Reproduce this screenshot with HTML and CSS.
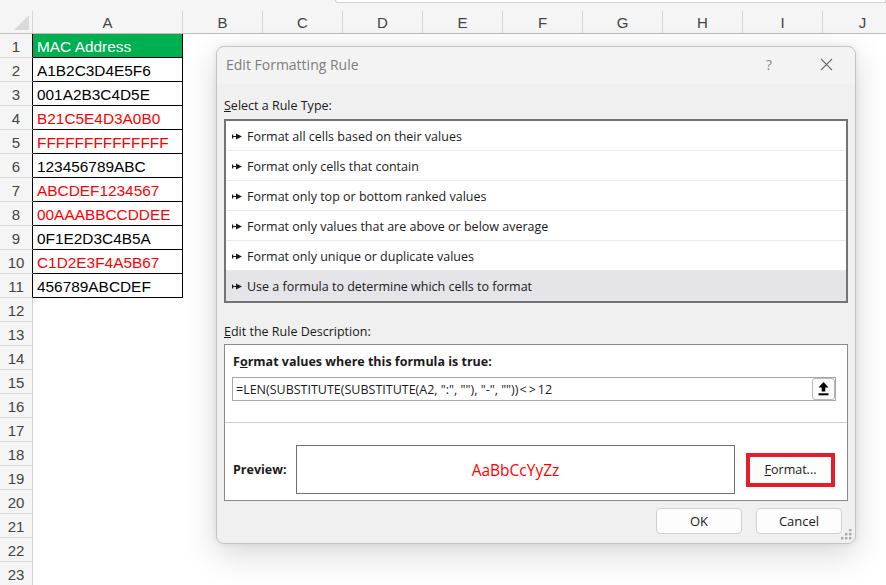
FILE: index.html
```html
<!DOCTYPE html>
<html lang="en">
<head>
    <meta charset="UTF-8">
    <meta name="viewport" content="width=device-width, initial-scale=1.0">
    <title>Edit Formatting Rule</title>
    <link rel="stylesheet" href="styles.css">
</head>
<body>
    <div class="sheet">
        <div class="top-strip"><div class="formula-edge"></div></div>
        <div class="row head">
            <div class="corner"><span class="tri"></span></div>
            <div class="ch">A</div>
            <div class="ch">B</div>
            <div class="ch">C</div>
            <div class="ch">D</div>
            <div class="ch">E</div>
            <div class="ch">F</div>
            <div class="ch">G</div>
            <div class="ch">H</div>
            <div class="ch">I</div>
            <div class="ch">J</div>
        </div>
        <div class="row"><div class="rh b">1</div><div class="cell b hdr">MAC Address</div></div>
        <div class="row"><div class="rh b">2</div><div class="cell b">A1B2C3D4E5F6</div></div>
        <div class="row"><div class="rh b">3</div><div class="cell b">001A2B3C4D5E</div></div>
        <div class="row"><div class="rh b">4</div><div class="cell b red">B21C5E4D3A0B0</div></div>
        <div class="row"><div class="rh b">5</div><div class="cell b red">FFFFFFFFFFFFFF</div></div>
        <div class="row"><div class="rh b">6</div><div class="cell b">123456789ABC</div></div>
        <div class="row"><div class="rh b">7</div><div class="cell b red">ABCDEF1234567</div></div>
        <div class="row"><div class="rh b">8</div><div class="cell b red">00AAABBCCDDEE</div></div>
        <div class="row"><div class="rh b">9</div><div class="cell b">0F1E2D3C4B5A</div></div>
        <div class="row"><div class="rh b">10</div><div class="cell b red">C1D2E3F4A5B67</div></div>
        <div class="row"><div class="rh b">11</div><div class="cell b">456789ABCDEF</div></div>
        <div class="row"><div class="rh">12</div><div class="cell"></div></div>
        <div class="row"><div class="rh">13</div><div class="cell"></div></div>
        <div class="row"><div class="rh">14</div><div class="cell"></div></div>
        <div class="row"><div class="rh">15</div><div class="cell"></div></div>
        <div class="row"><div class="rh">16</div><div class="cell"></div></div>
        <div class="row"><div class="rh">17</div><div class="cell"></div></div>
        <div class="row"><div class="rh">18</div><div class="cell"></div></div>
        <div class="row"><div class="rh">19</div><div class="cell"></div></div>
        <div class="row"><div class="rh">20</div><div class="cell"></div></div>
        <div class="row"><div class="rh">21</div><div class="cell"></div></div>
        <div class="row"><div class="rh">22</div><div class="cell"></div></div>
        <div class="row"><div class="rh">23</div><div class="cell"></div></div>
    </div>

    <div class="dialog">
        <div class="title-bar">
            <span class="title">Edit Formatting Rule</span>
            <span class="tb-btn help">?</span>
            <span class="tb-btn close">
                <svg width="13" height="13" viewBox="0 0 13 13"><path d="M1 1 L12 12 M12 1 L1 12" stroke="#6f6f6f" stroke-width="1.1" fill="none"/></svg>
            </span>
        </div>
        <div class="dialog-body">
            <div class="label"><u>S</u>elect a Rule Type:</div>
            <div class="rule-list">
                <div class="rule-item"><svg class="arrow" width="10" height="7" viewBox="0 0 10 7"><path d="M0 1.5 H1.2 V3 H4 V0.6 L10 3.5 L4 6.4 V4 H1.2 V5.5 H0 Z" fill="#1a1a1a"/></svg>Format all cells based on their values</div>
                <div class="rule-item"><svg class="arrow" width="10" height="7" viewBox="0 0 10 7"><path d="M0 1.5 H1.2 V3 H4 V0.6 L10 3.5 L4 6.4 V4 H1.2 V5.5 H0 Z" fill="#1a1a1a"/></svg>Format only cells that contain</div>
                <div class="rule-item"><svg class="arrow" width="10" height="7" viewBox="0 0 10 7"><path d="M0 1.5 H1.2 V3 H4 V0.6 L10 3.5 L4 6.4 V4 H1.2 V5.5 H0 Z" fill="#1a1a1a"/></svg>Format only top or bottom ranked values</div>
                <div class="rule-item"><svg class="arrow" width="10" height="7" viewBox="0 0 10 7"><path d="M0 1.5 H1.2 V3 H4 V0.6 L10 3.5 L4 6.4 V4 H1.2 V5.5 H0 Z" fill="#1a1a1a"/></svg>Format only values that are above or below average</div>
                <div class="rule-item"><svg class="arrow" width="10" height="7" viewBox="0 0 10 7"><path d="M0 1.5 H1.2 V3 H4 V0.6 L10 3.5 L4 6.4 V4 H1.2 V5.5 H0 Z" fill="#1a1a1a"/></svg>Format only unique or duplicate values</div>
                <div class="rule-item selected"><svg class="arrow" width="10" height="7" viewBox="0 0 10 7"><path d="M0 1.5 H1.2 V3 H4 V0.6 L10 3.5 L4 6.4 V4 H1.2 V5.5 H0 Z" fill="#1a1a1a"/></svg>Use a formula to determine which cells to format</div>
            </div>

            <div class="label desc-label"><u>E</u>dit the Rule Description:</div>
            <div class="desc-box">
                <div class="bold-label">F<u>o</u>rmat values where this formula is true:</div>
                <div class="formula-input">
                    <span class="formula-text">=LEN(SUBSTITUTE(SUBSTITUTE(A2, ":", ""), "-", ""))<span class="op">&lt;&gt;</span>12</span>
                    <span class="ref-btn">
                        <svg width="11" height="14" viewBox="0 0 11 14"><path d="M5.5 0 L10.5 5.5 H7.3 V9.5 H3.7 V5.5 H0.5 Z" fill="#000"/><rect x="0.5" y="11.3" width="10" height="2" fill="#000"/></svg>
                    </span>
                </div>
                <div class="desc-sep"></div>
                <div class="preview-row">
                    <span class="preview-label">Preview:</span>
                    <div class="preview-box">AaBbCcYyZz</div>
                    <div class="format-btn"><u>F</u>ormat...</div>
                </div>
            </div>

            <div class="buttons">
                <div class="btn">OK</div>
                <div class="btn">Cancel</div>
            </div>
        </div>
        <svg class="grip" width="12" height="12" viewBox="0 0 12 12" fill="#a8a8a8">
            <rect x="8" y="0" width="2.4" height="2.4"/>
            <rect x="4" y="4" width="2.4" height="2.4"/>
            <rect x="8" y="4" width="2.4" height="2.4"/>
            <rect x="0" y="8" width="2.4" height="2.4"/>
            <rect x="4" y="8" width="2.4" height="2.4"/>
            <rect x="8" y="8" width="2.4" height="2.4"/>
        </svg>
    </div>
</body>
</html>
```

FILE: styles.css
```css
* {
    box-sizing: border-box;
}
body {
    margin: 0;
    padding: 0;
    width: 886px;
    height: 585px;
    overflow: hidden;
    position: relative;
    background-color: #fff;
    font-family: "Liberation Sans", Arial, sans-serif;
}

/* spreadsheet */
.sheet {
    width: 886px;
    overflow: hidden;
}
.top-strip {
    height: 11px;
    background-color: #f5f5f5;
}
.formula-edge {
    margin-left: 335px;
    height: 3px;
    background-color: #fff;
    border: 1px solid #d2d2d2;
    border-top: none;
    border-bottom-left-radius: 4px;
}
.row {
    display: grid;
    grid-template-columns: 33px 150px 1fr;
    height: 24px;
}
.row.head {
    grid-template-columns: 33px 150px repeat(9, 80px);
    height: 23px;
    background-color: #f5f5f5;
    border-bottom: 1px solid #bdbdbd;
}
.corner {
    position: relative;
    border-right: 1px solid #d6d6d6;
}
.tri {
    position: absolute;
    right: 3px;
    bottom: 3px;
    width: 0;
    height: 0;
    border-left: 15px solid transparent;
    border-bottom: 15px solid #d9d9d9;
}
.ch {
    display: flex;
    align-items: center;
    justify-content: center;
    font-size: 15px;
    color: #444;
    border-right: 1px solid #d6d6d6;
    padding-top: 1px;
}
.rh {
    display: flex;
    align-items: center;
    justify-content: center;
    font-size: 15px;
    color: #444;
    background-color: #f5f5f5;
    border-right: 1px solid #d0d0d0;
    border-bottom: 1px solid #dcdcdc;
    padding-top: 1px;
}
.rh.b {
    border-right-color: #000;
}
.cell {
    display: flex;
    align-items: center;
    padding: 2px 0 0 4px;
    font-size: 15.4px;
    color: #000;
    white-space: nowrap;
}
.cell.b {
    border-right: 1px solid #000;
    border-bottom: 1px solid #000;
}
.cell.hdr {
    background-color: #00b050;
    color: #fff;
}
.cell.red {
    color: #ff0000;
}

/* dialog */
.dialog {
    position: absolute;
    left: 216px;
    top: 46px;
    width: 640px;
    height: 498px;
    background-color: #f0f0f0;
    border: 1px solid #c4c4c4;
    border-radius: 8px;
    box-shadow: 0 10px 34px rgba(0, 0, 0, 0.16), 0 0 6px rgba(0, 0, 0, 0.08);
    font-family: "Open Sans", "Noto Sans", sans-serif;
    font-size: 12.5px;
    color: #1a1a1a;
}
.title-bar {
    display: flex;
    align-items: center;
    height: 37px;
    padding: 0 0 2px 9px;
    background-color: #f3f3f3;
    border-radius: 8px 8px 0 0;
}
.title {
    font-size: 14px;
    color: #7e7e7e;
    flex: 1;
}
.tb-btn {
    display: flex;
    align-items: center;
    justify-content: center;
    width: 40px;
    height: 30px;
}
.help {
    font-size: 14px;
    color: #8a8a8a;
    margin-right: 17px;
}
.close {
    margin-right: 9px;
}
.dialog-body {
    padding: 0 7px;
}
.label {
    height: 18px;
    line-height: 18px;
    margin-top: 13px;
    margin-bottom: 4px;
}
.desc-label {
    margin-top: 20px;
    margin-bottom: 3px;
}
.rule-list {
    height: 184px;
    background-color: #fff;
    border: 2px solid #737373;
}
.rule-item {
    display: flex;
    align-items: center;
    height: 30px;
    padding: 1px 0 0 6px;
    border-bottom: 1px solid #e9e9e9;
}
.rule-item:last-child {
    border-bottom: none;
}
.rule-item.selected {
    background-color: #e4e4e9;
}
.arrow {
    margin-right: 5px;
}
.desc-box {
    height: 157px;
    background-color: #fff;
    border: 1px solid #8a8a8a;
    padding: 8px 11px 0 7px;
}
.bold-label {
    height: 18px;
    line-height: 18px;
    font-weight: bold;
    padding-left: 1px;
}
.formula-input {
    display: flex;
    align-items: center;
    margin-top: 6px;
    height: 24px;
    border: 1px solid #a8a8a8;
    padding-left: 3px;
}
.formula-text {
    flex: 1;
}
.op {
    letter-spacing: 2px;
    margin-left: 1px;
}
.ref-btn {
    display: flex;
    align-items: center;
    justify-content: center;
    width: 23px;
    height: 22px;
    border: 1px solid #b8b8b8;
    border-radius: 3px;
    background-color: #fbfbfb;
}
.desc-sep {
    margin: 21px -11px 0 -7px;
    height: 1px;
    background-color: #cfcfcf;
}
.preview-row {
    display: flex;
    align-items: center;
    margin-top: 22px;
}
.preview-label {
    width: 64px;
    padding-left: 1px;
    font-weight: bold;
}
.preview-box {
    display: flex;
    align-items: center;
    justify-content: center;
    width: 439px;
    height: 49px;
    border: 1px solid #6f6f6f;
    font-size: 15.5px;
    color: #ff0000;
}
.format-btn {
    display: flex;
    align-items: center;
    justify-content: center;
    margin-left: 11px;
    width: 89px;
    height: 34px;
    border: 4px solid #e41e26;
    background-color: #fdfdfd;
}
.buttons {
    display: flex;
    justify-content: flex-end;
    gap: 14px;
    margin-top: 7px;
    padding-right: 6px;
}
.btn {
    display: flex;
    align-items: center;
    justify-content: center;
    width: 86px;
    height: 26px;
    background-color: #fdfdfd;
    border: 1px solid #d0d0d0;
    border-radius: 4px;
    font-size: 13px;
}
.grip {
    position: absolute;
    right: 2px;
    bottom: 2px;
}
```
